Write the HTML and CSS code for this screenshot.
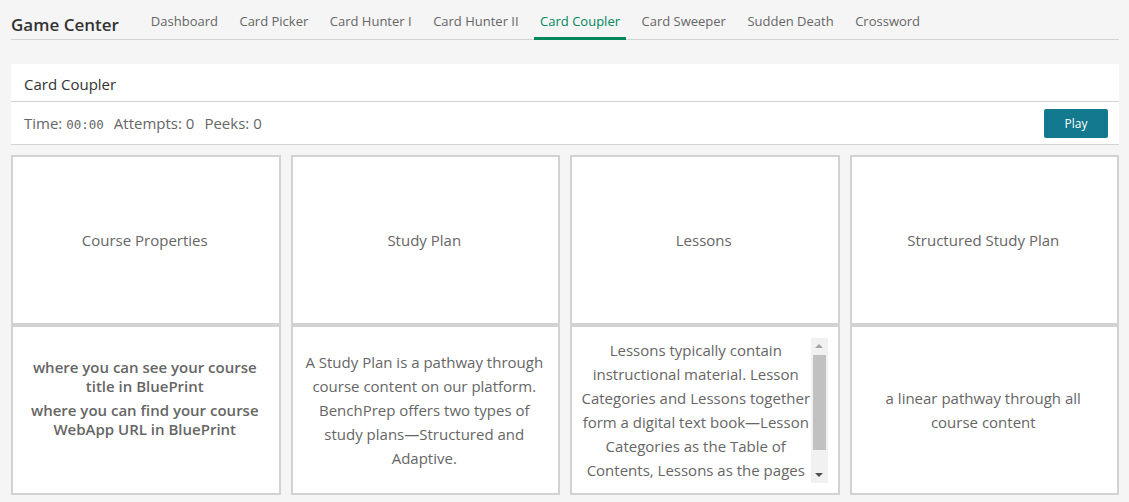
FILE: index.html
```html
<!DOCTYPE html>
<html lang="en">
<head>
<meta charset="utf-8">
<title>Game Center - Card Coupler</title>
<link rel="stylesheet" href="styles.css">
</head>
<body>
<div class="page">
  <header class="topbar">
    <h1 class="brand">Game Center</h1>
    <nav class="tabs">
      <a class="tab">Dashboard</a>
      <a class="tab">Card Picker</a>
      <a class="tab">Card Hunter I</a>
      <a class="tab">Card Hunter II</a>
      <a class="tab active">Card Coupler</a>
      <a class="tab">Card Sweeper</a>
      <a class="tab">Sudden Death</a>
      <a class="tab">Crossword</a>
    </nav>
  </header>

  <section class="panel">
    <div class="panel-title">Card Coupler</div>
    <div class="panel-stats">
      <div class="stats">
        <span class="stat">Time: <code class="mono">00:00</code></span>
        <span class="stat">Attempts: 0</span>
        <span class="stat">Peeks: 0</span>
      </div>
      <button class="play">Play</button>
    </div>
  </section>

  <section class="board">
    <div class="card"><div class="card-text">Course Properties</div></div>
    <div class="card"><div class="card-text">Study Plan</div></div>
    <div class="card"><div class="card-text">Lessons</div></div>
    <div class="card"><div class="card-text">Structured Study Plan</div></div>

    <div class="card">
      <div class="card-text strong">
        <p>where you can see your course title in BluePrint</p>
        <p>where you can find your course WebApp URL in BluePrint</p>
      </div>
    </div>
    <div class="card"><div class="card-text">A Study Plan is a pathway through course content on our platform. BenchPrep offers two types of study plans—Structured and Adaptive.</div></div>
    <div class="card">
      <div class="scrollbox">
        <div class="scroll-text">Lessons typically contain instructional material. Lesson Categories and Lessons together form a digital text book—Lesson Categories as the Table of Contents, Lessons as the pages of the book. Lessons can include text, images, videos and other media.</div>
        <div class="scrollbar">
          <div class="sb-btn"><span class="arrow-up"></span></div>
          <div class="sb-track"><div class="sb-thumb"></div></div>
          <div class="sb-btn"><span class="arrow-down"></span></div>
        </div>
      </div>
    </div>
    <div class="card"><div class="card-text">a linear pathway through all course content</div></div>
  </section>
</div>
</body>
</html>
```

FILE: styles.css
```css
* { box-sizing: border-box; }

html, body {
  margin: 0;
  padding: 0;
  background: #f5f5f5;
  font-family: "Open Sans", "Noto Sans", sans-serif;
  color: #555;
}

.page {
  padding: 0 10px 0 11px;
}

.topbar {
  display: flex;
  align-items: flex-end;
  border-bottom: 1px solid #d4d4d4;
  height: 40px;
}

.brand {
  margin: 0 26px 0 0;
  font-size: 17px;
  font-weight: 600;
  color: #333;
  line-height: 22px;
  padding-bottom: 3px;
}

.tabs {
  display: flex;
}

.tab {
  display: block;
  font-size: 13px;
  line-height: 18px;
  color: #666;
  padding: 11px 6px 7px;
  margin-right: 9.5px;
  border-bottom: 3px solid transparent;
  margin-bottom: -1px;
  text-decoration: none;
}

.tab.active {
  color: #00875a;
  border-bottom-color: #00875a;
}

.panel {
  margin-top: 24px;
  background: #fff;
  border-bottom: 1px solid #d4d4d4;
}

.panel-title {
  height: 38px;
  padding: 3px 13px 0;
  display: flex;
  align-items: center;
  font-size: 15px;
  color: #333;
  border-bottom: 1px solid #d4d4d4;
}

.panel-stats {
  height: 42px;
  padding: 0 11px 0 13px;
  display: flex;
  align-items: center;
  justify-content: space-between;
}

.stats {
  display: flex;
  gap: 10px;
  font-size: 15px;
  color: #666;
}

.mono {
  font-family: "DejaVu Sans Mono", "Liberation Mono", monospace;
  font-size: 12.5px;
  color: #666;
}

.play {
  width: 64px;
  height: 29px;
  border: none;
  border-radius: 2px;
  background: #13798e;
  color: #fff;
  font-family: "Open Sans", sans-serif;
  font-size: 12px;
  cursor: pointer;
}

.board {
  margin-top: 10px;
  display: grid;
  grid-template-columns: repeat(4, 1fr);
  column-gap: 10px;
}

.card {
  height: 170px;
  background: #fff;
  border: 2px solid #d2d2d2;
  display: flex;
  align-items: center;
  justify-content: center;
  padding: 0 10px 0 8px;
}

.card-text {
  font-size: 15px;
  line-height: 24px;
  color: #666;
  text-align: center;
  padding: 0 3px;
}

.card-text.strong {
  font-weight: 600;
  line-height: 19px;
  padding: 0 4px 24px;
}

.card-text.strong p {
  margin: 0;
}

.card-text.strong p + p {
  margin-top: 5px;
}

.scrollbox {
  width: 100%;
  height: 145px;
  display: flex;
}

.scroll-text {
  flex: 1;
  overflow: hidden;
  padding: 0 0 0 1px;
  font-size: 15px;
  line-height: 24px;
  color: #666;
  text-align: center;
}

.scrollbar {
  width: 17px;
  display: flex;
  flex-direction: column;
  background: #f1f1f1;
}

.sb-btn {
  height: 16px;
  display: flex;
  align-items: center;
  justify-content: center;
}

.arrow-up {
  width: 0;
  height: 0;
  border-left: 4px solid transparent;
  border-right: 4px solid transparent;
  border-bottom: 4px solid #a3a3a3;
}

.arrow-down {
  width: 0;
  height: 0;
  border-left: 4px solid transparent;
  border-right: 4px solid transparent;
  border-top: 4px solid #505050;
}

.sb-track {
  flex: 1;
  padding: 1px 2px 0;
}

.sb-thumb {
  height: 95px;
  background: #c1c1c1;
}
```
